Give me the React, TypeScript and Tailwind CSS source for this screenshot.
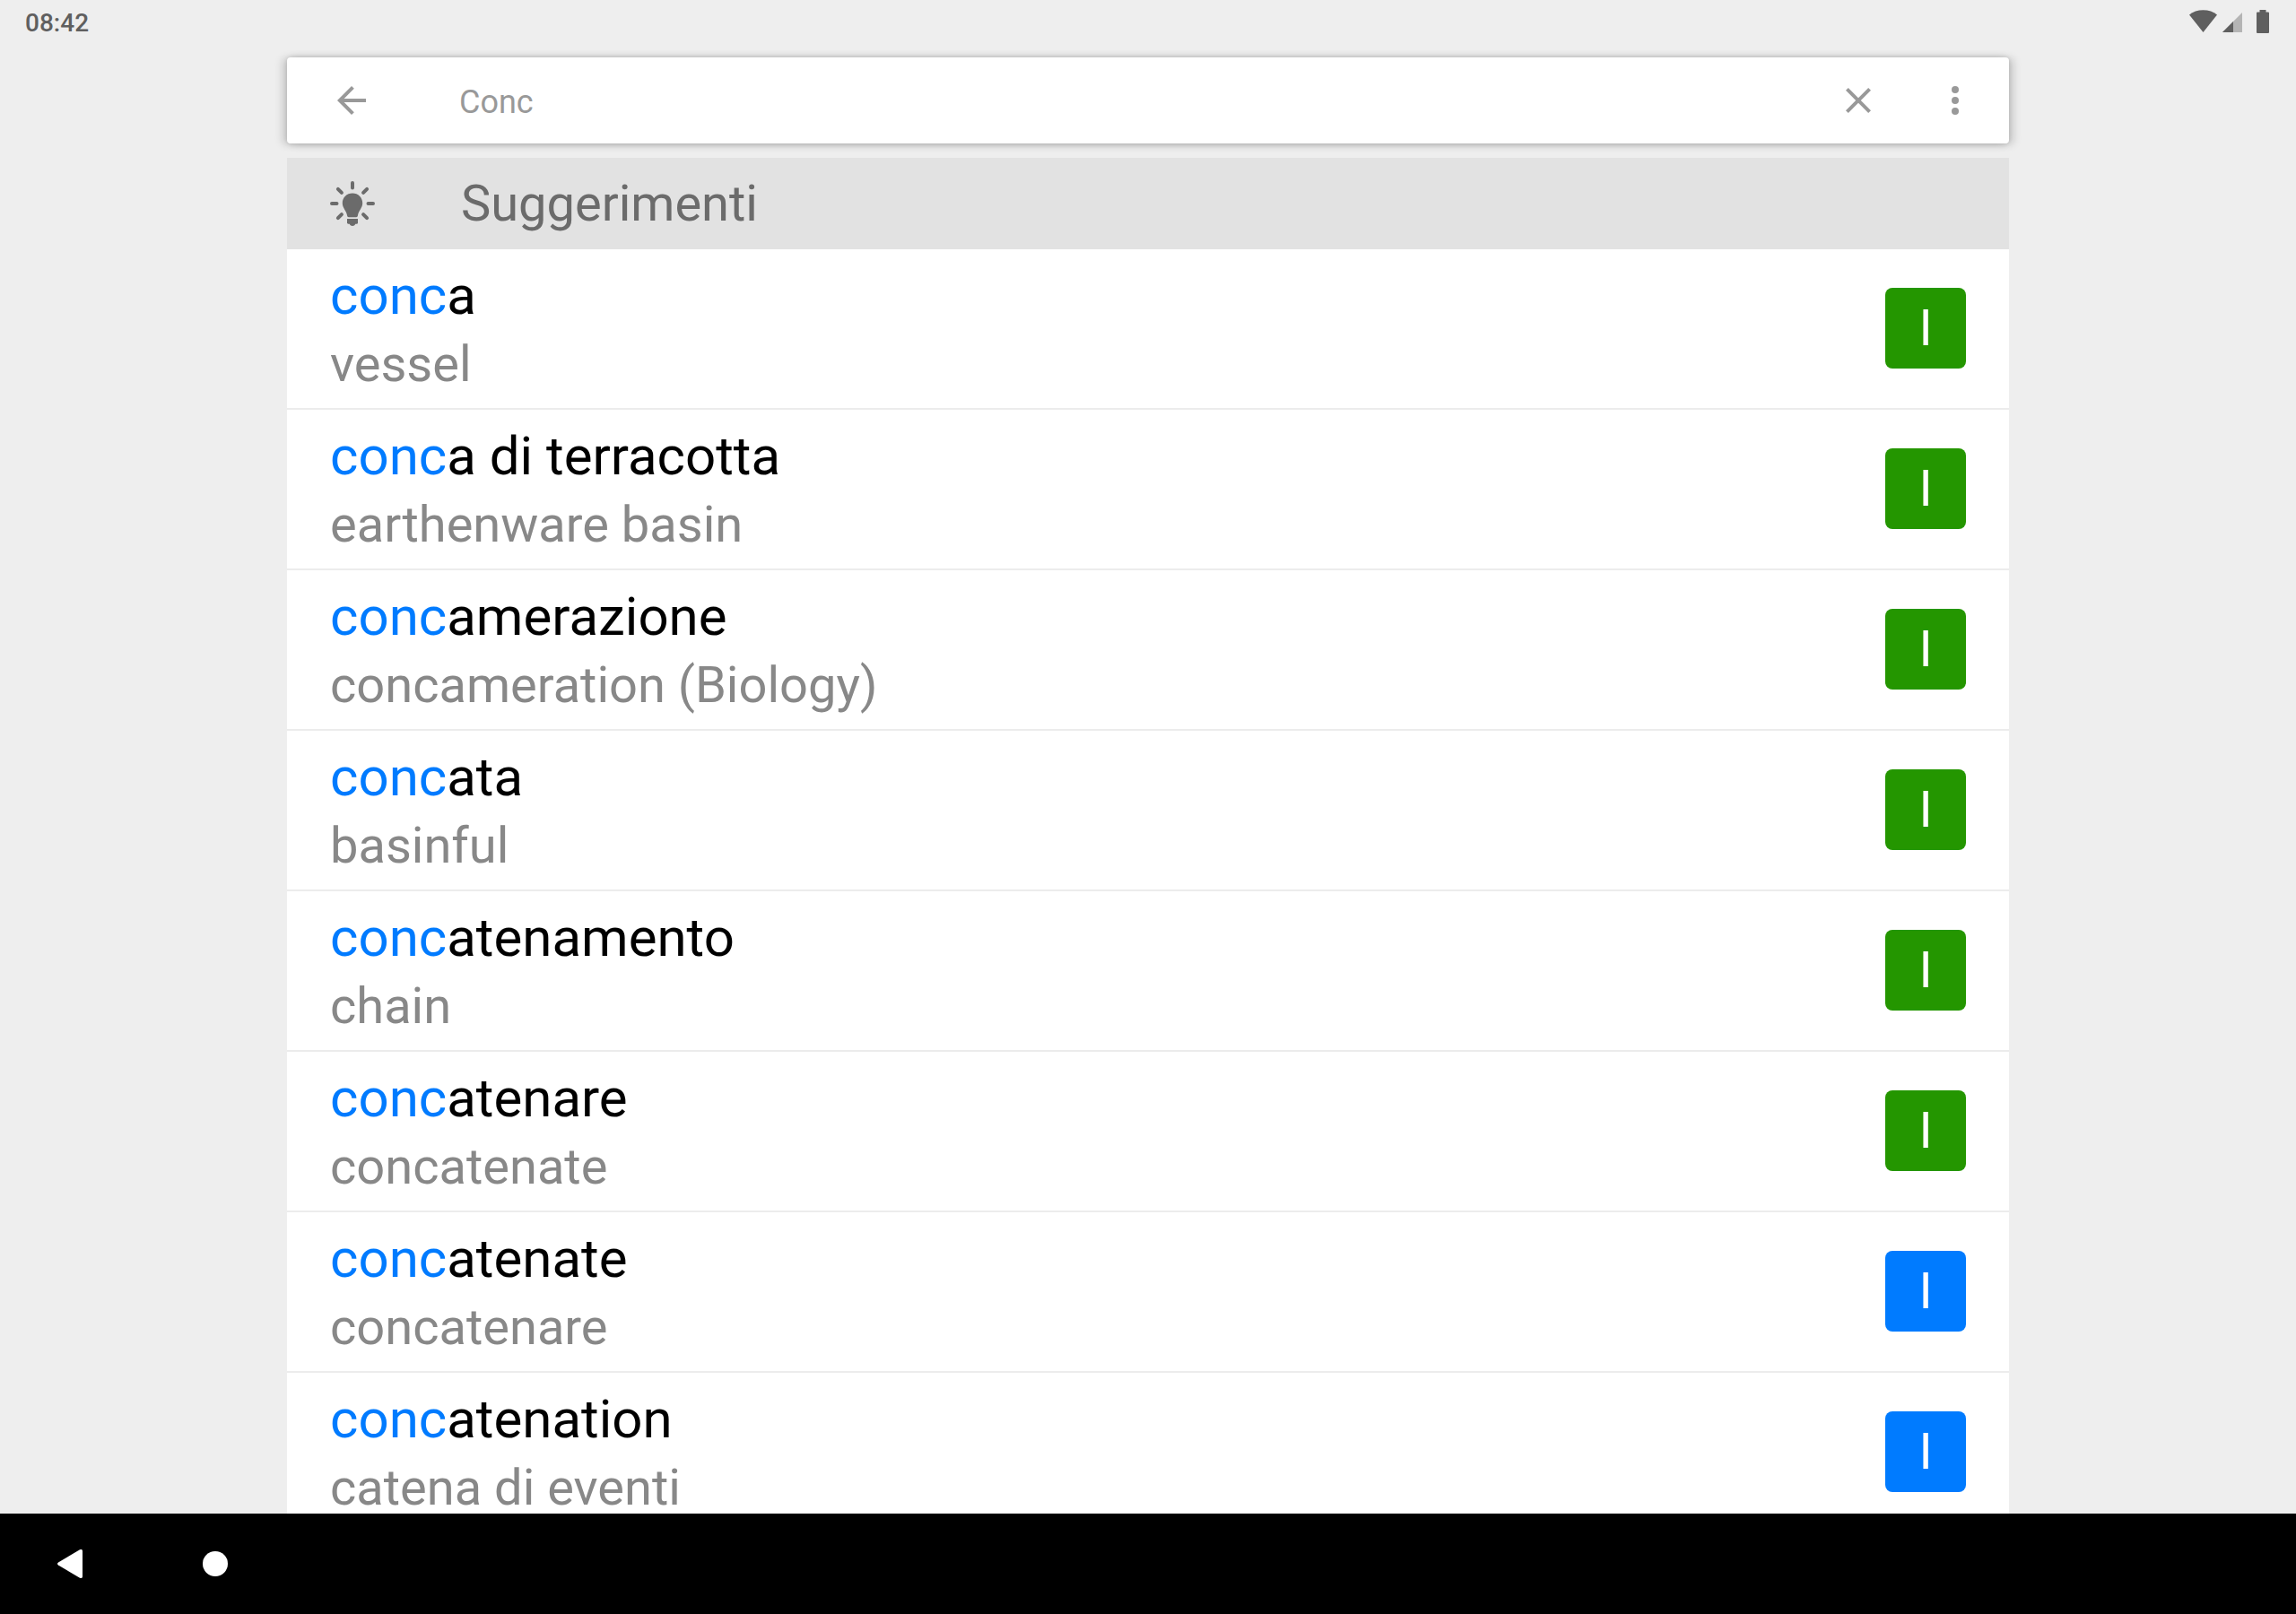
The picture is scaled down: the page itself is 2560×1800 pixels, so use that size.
type Lang = "it" | "en";

const QUERY = "conc";

const suggestions: { rest: string; translation: string; lang: Lang }[] = [
  { rest: "a", translation: "vessel", lang: "it" },
  { rest: "a di terracotta", translation: "earthenware basin", lang: "it" },
  { rest: "amerazione", translation: "concameration (Biology)", lang: "it" },
  { rest: "ata", translation: "basinful", lang: "it" },
  { rest: "atenamento", translation: "chain", lang: "it" },
  { rest: "atenare", translation: "concatenate", lang: "it" },
  { rest: "atenate", translation: "concatenare", lang: "en" },
  { rest: "atenation", translation: "catena di eventi", lang: "en" },
];

function StatusBar() {
  return (
    <div className="flex h-16 shrink-0 items-start justify-between pl-7 pr-[30px] text-[#5f5f5f]">
      <span className="pt-2.5 text-[28px] leading-8 font-medium">08:42</span>
      <div className="flex pt-[11px]">
        <svg className="mr-[6px] h-[26px] w-[31px]" viewBox="0 0 31 26" fill="currentColor" aria-hidden="true">
          <path d="M0 5.6C4 2 9.500 0.300 15.500 0.300S27 2 31 5.600L15.500 25Z" />
        </svg>
        <svg className="mr-4 h-[26px] w-[22px]" viewBox="0 0 22 26" fill="currentColor" aria-hidden="true">
          <path d="M0 25L22 3V25Z" fill="#b4b4b4" />
          <path d="M0 25L12 13V25Z" />
        </svg>
        <svg className="h-[26px] w-[14px]" viewBox="0 0 14 26" fill="currentColor" aria-hidden="true">
          <path d="M3.500 0h7v2.600H13a1 1 0 0 1 1 1V25a1 1 0 0 1-1 1H1a1 1 0 0 1-1-1V3.600a1 1 0 0 1 1-1h2.500Z" />
        </svg>
      </div>
    </div>
  );
}

function SearchBar() {
  return (
    <form className="flex h-24 shrink-0 items-center rounded bg-white px-9 text-[#999] shadow-[0_0_4px_rgba(0,0,0,0.1),-5px_1px_10px_rgba(0,0,0,0.16),5px_1px_10px_rgba(0,0,0,0.16)]">
      <button type="button" aria-label="Indietro" className="ml-3 shrink-0">
        <svg className="size-12" viewBox="0 0 24 24" fill="currentColor">
          <path d="M20 11H7.830l5.590-5.590L12 4l-8 8 8 8 1.410-1.410L7.830 13H20v-2z" />
        </svg>
      </button>
      <input
        type="text"
        aria-label="Cerca"
        defaultValue="Conc"
        className="mx-24 min-w-0 flex-1 bg-transparent pt-1 text-4xl leading-12 outline-none"
      />
      <button type="button" aria-label="Cancella" className="shrink-0">
        <svg className="size-12" viewBox="0 0 24 24" fill="currentColor">
          <path d="M19 6.410L17.590 5 12 10.590 6.410 5 5 6.410 10.590 12 5 17.590 6.410 19 12 13.410 17.590 19 19 17.590 13.410 12z" />
        </svg>
      </button>
      <button type="button" aria-label="Altre opzioni" className="ml-[60px] shrink-0">
        <svg className="size-12" viewBox="0 0 24 24" fill="currentColor">
          <circle cx="12" cy="6" r="2" />
          <circle cx="12" cy="12" r="2" />
          <circle cx="12" cy="18" r="2" />
        </svg>
      </button>
    </form>
  );
}

function BulbIcon() {
  return (
    <svg className="size-[50px] shrink-0" viewBox="0 0 50 50" fill="currentColor" aria-hidden="true">
      <g stroke="currentColor" strokeWidth="4" strokeLinecap="round">
        <path d="M25 2v5.500M2 25h5.500M42.500 25H48M8.900 8.900l4 4M41.100 8.900l-4 4M8.900 41.100l4-4M41.100 41.100l-4-4" />
      </g>
      <path d="M25 13.500c-6.400 0-11.200 4.800-11.200 11 0 5.500 4.400 8.500 5.200 13.500.2 1.500.8 2.200 1.800 2.200h8.400c1 0 1.600-.7 1.800-2.200.8-5 5.200-8 5.200-13.500 0-6.200-4.800-11-11.200-11Z" />
      <path d="M19 42h12v4.500c0 .8-.5 1.200-1.300 1.200h-1.400C27.600 49 26.500 50 25 50s-2.600-1-3.300-2.300h-1.400c-.8 0-1.300-.4-1.300-1.200Z" />
    </svg>
  );
}

function LanguageBadge({ lang }: { lang: Lang }) {
  return (
    <span
      className={`flex size-[90px] shrink-0 items-center justify-center rounded-lg text-[56px] leading-none text-white ${
        lang === "it" ? "bg-[#249600]" : "bg-[#007bff]"
      }`}
    >
      I
    </span>
  );
}

export default function App() {
  return (
    <div className="flex h-screen flex-col overflow-hidden bg-[#eee] font-[Roboto,sans-serif]">
      <StatusBar />
      <main className="mx-auto flex min-h-0 w-3/4 flex-1 flex-col">
        <SearchBar />
        <section className="mt-4 flex min-h-0 flex-1 flex-col">
          <header className="flex shrink-0 items-center bg-[#e2e2e2] px-12 py-[15px] text-[#6b6b6b]">
            <BulbIcon />
            <h1 className="ml-24 text-[56px] leading-[72px]">Suggerimenti</h1>
          </header>
          <ul className="min-h-0 flex-1 overflow-hidden bg-white">
            {suggestions.map((s) => (
              <li key={s.rest} className="border-b-2 border-[#ececec]">
                <button type="button" className="flex w-full items-center justify-between px-12 pb-px text-left">
                  <span className="flex flex-col gap-3 pt-4 pb-5">
                    <span className="text-[60px] leading-[72px] text-black">
                      <span className="text-[#007bff]">{QUERY}</span>
                      {s.rest}
                    </span>
                    <span className="text-[56px] leading-14 text-[#888]">{s.translation}</span>
                  </span>
                  <LanguageBadge lang={s.lang} />
                </button>
              </li>
            ))}
          </ul>
        </section>
      </main>
      <nav aria-label="Sistema" className="flex h-28 shrink-0 bg-black text-white">
        <button type="button" aria-label="Indietro" className="flex w-40 items-center justify-center">
          <svg className="size-8" viewBox="0 0 32 32" fill="currentColor">
            <path d="M1 14.600L24.500 .400C26.500-.500 28 0 28 2V30C28 32 26.500 32.500 24.500 31.600L1 17.400C-.300 16.600-.300 15.400 1 14.600Z" />
          </svg>
        </button>
        <button type="button" aria-label="Home" className="flex w-40 items-center justify-center">
          <span className="size-7 rounded-full bg-white" />
        </button>
      </nav>
    </div>
  );
}
